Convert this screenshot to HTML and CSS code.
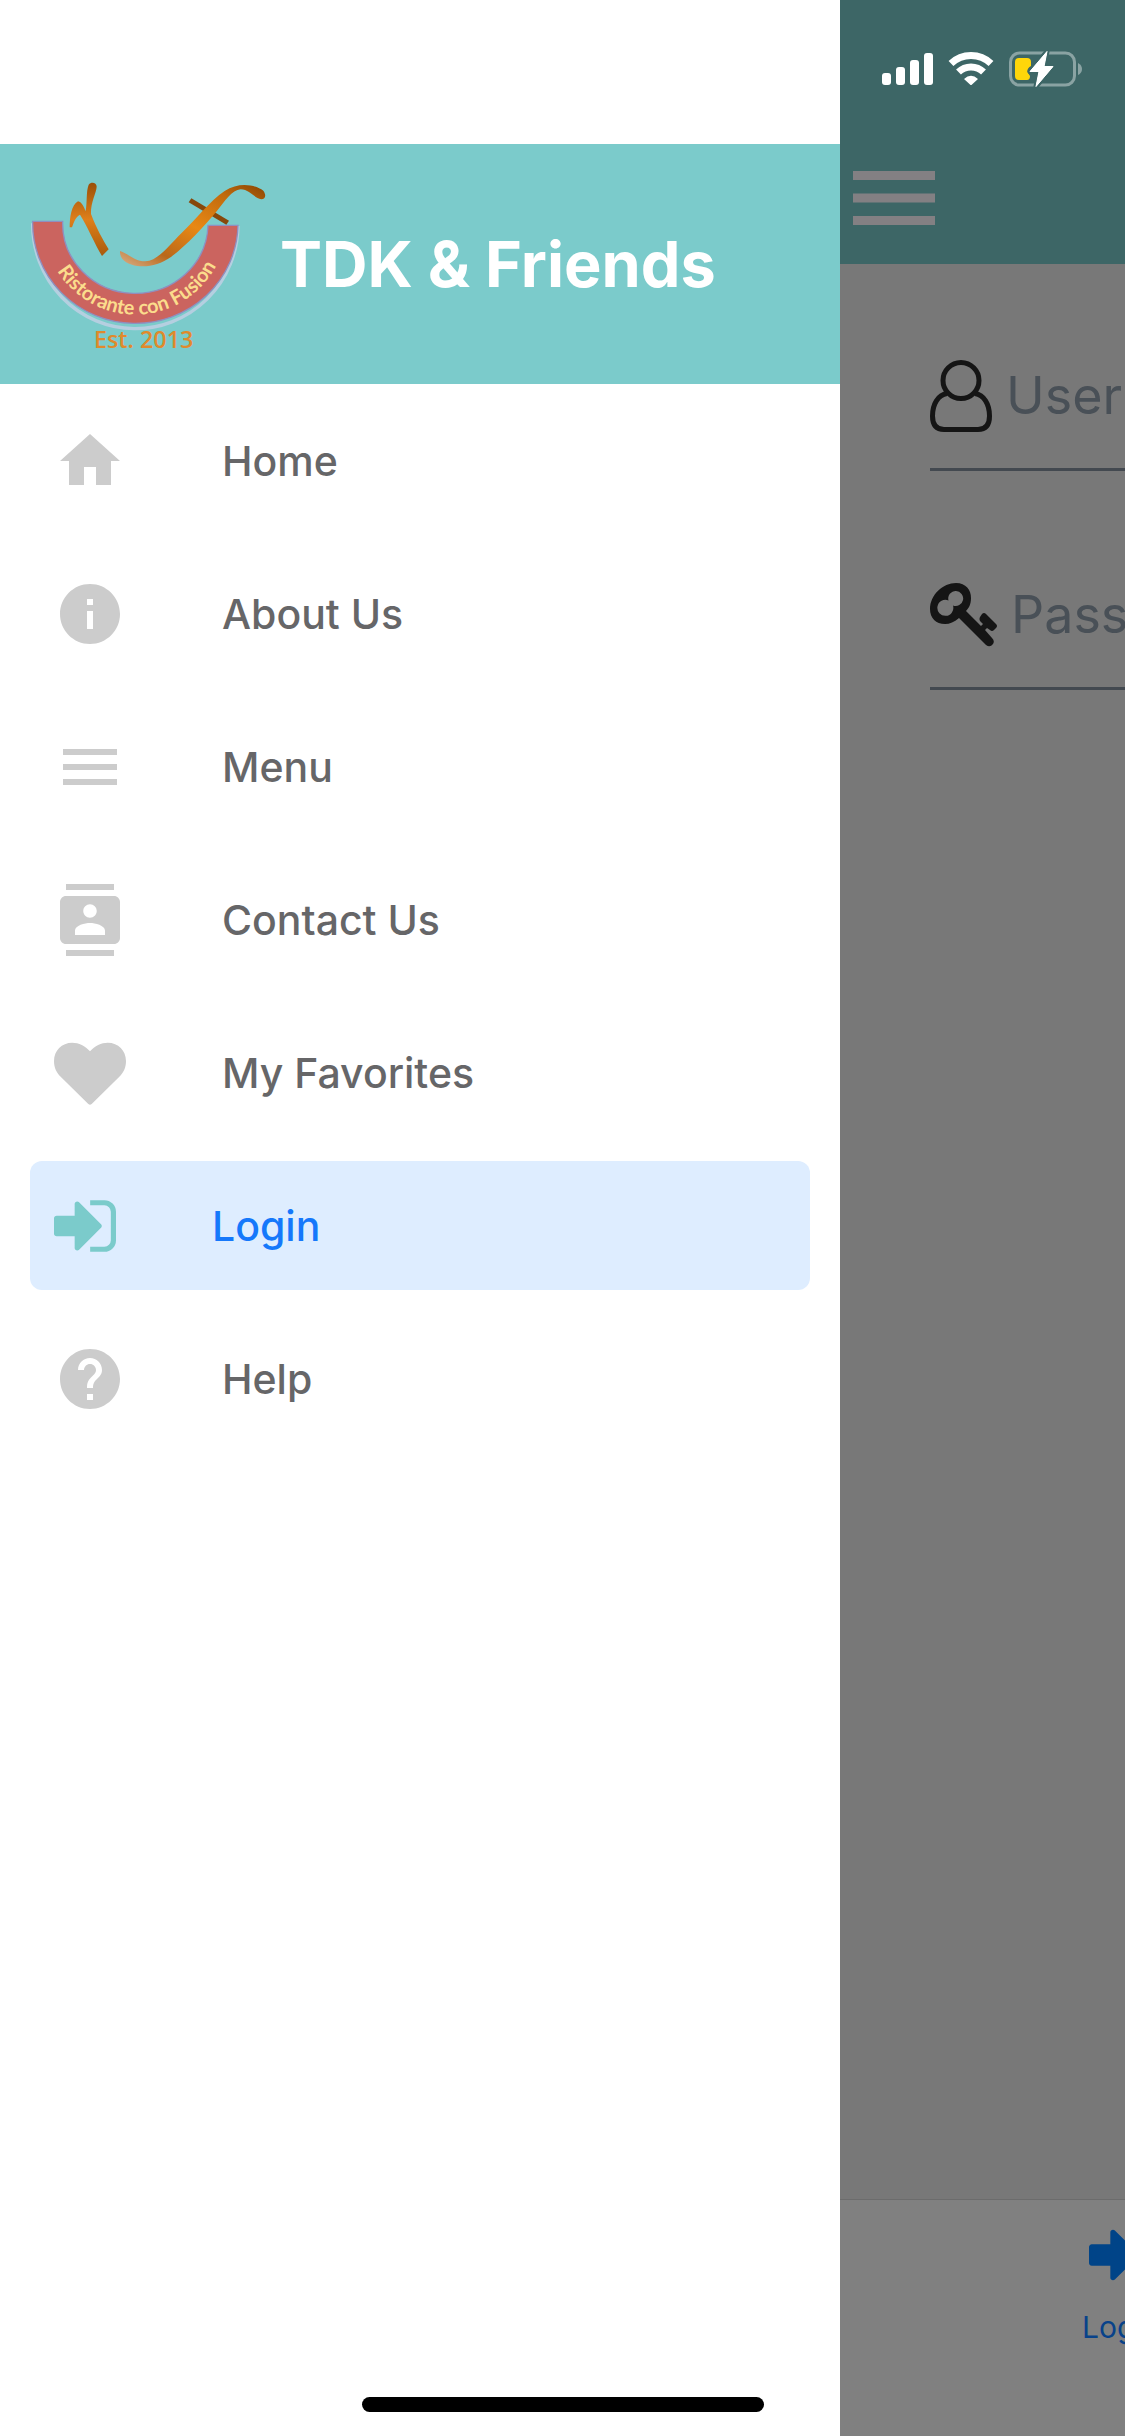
FILE: index.html
```html
<!DOCTYPE html>
<html lang="en">
<head>
  <meta charset="utf-8">
  <meta name="viewport" content="width=device-width, initial-scale=1">
  <title>TDK &amp; Friends</title>
  <link rel="stylesheet" href="styles.css">
</head>
<body>
  <div class="app">
    <aside class="drawer">
      <header class="brand">
        <svg class="brand-logo" viewBox="90 42 720 720" role="img" aria-label="Ristorante con Fusion">
          <defs>
            <linearGradient id="stroke-n" x1="0" y1="0" x2="0" y2="1">
              <stop offset="0" stop-color="#9a4f08"/>
              <stop offset="0.5" stop-color="#de7f1a"/>
              <stop offset="1" stop-color="#a85a0c"/>
            </linearGradient>
            <linearGradient id="stroke-f" x1="0" y1="1" x2="1" y2="0">
              <stop offset="0" stop-color="#d9b089"/>
              <stop offset="0.22" stop-color="#b9681a"/>
              <stop offset="0.5" stop-color="#e88814"/>
              <stop offset="0.8" stop-color="#c06a0d"/>
              <stop offset="1" stop-color="#8a4503"/>
            </linearGradient>
            <path id="text-arc" d="M132 280A274 274 0 0 0 680 280"/>
          </defs>
          <path d="M98 280A308 312 0 0 0 714 288" fill="none" stroke="#b5cfe0" stroke-width="10"/>
          <path d="M98 274H188A218 210 0 0 0 624 286H714A308 300 0 0 1 98 274Z" fill="#cb645f" stroke="#8f8fc0" stroke-width="4"/>
          <path d="M209 292C209 262 214 226 234 214C246 216 252 232 257 244C262 214 258 184 266 164C274 154 290 158 290 170C289 190 272 214 273 252C288 292 310 332 326 358L306 378C284 342 260 284 240 254C226 262 222 276 216 292Z" fill="url(#stroke-n)"/>
          <path d="M574 205L687 272L679 284L566 217Z" fill="#87480b"/>
          <path d="M360 363C386 372 404 394 436 394C474 392 506 348 544 310C586 270 630 212 674 183C716 155 766 164 790 182C800 196 796 208 784 208C762 204 748 178 722 178C696 180 674 214 650 244C610 292 560 346 514 380C480 404 446 412 412 408C384 404 358 390 360 363Z" fill="url(#stroke-f)"/>
          <text class="logo-motto"><textPath href="#text-arc" startOffset="51%" text-anchor="middle">Ristorante con Fusion</textPath></text>
          <text class="logo-year" x="431" y="655" text-anchor="middle">Est. 2013</text>
        </svg>
        <h1 class="brand-title">TDK &amp; Friends</h1>
      </header>

      <nav class="menu">
        <a class="menu-item" href="#home">
          <svg class="menu-icon" viewBox="0 0 24 24" aria-hidden="true"><path d="M10 20v-6h4v6h5v-8h3L12 3 2 12h3v8z"/></svg>
          <span>Home</span>
        </a>
        <a class="menu-item" href="#about">
          <svg class="menu-icon" viewBox="0 0 24 24" aria-hidden="true"><path d="M12 2C6.48 2 2 6.48 2 12s4.480 10 10 10 10-4.480 10-10S17.520 2 12 2zm1 15h-2v-6h2v6zm0-8h-2V7h2v2z"/></svg>
          <span>About Us</span>
        </a>
        <a class="menu-item" href="#menu">
          <svg class="menu-icon" viewBox="0 0 24 24" aria-hidden="true"><path d="M3 18h18v-2H3v2zm0-5h18v-2H3v2zm0-7v2h18V6H3z"/></svg>
          <span>Menu</span>
        </a>
        <a class="menu-item" href="#contact">
          <svg class="menu-icon" viewBox="0 0 24 24" aria-hidden="true"><path d="M20 0H4v2h16V0zM4 24h16v-2H4v2zM20 4H4c-1.100 0-2 .9-2 2v12c0 1.100.9 2 2 2h16c1.100 0 2-.9 2-2V6c0-1.100-.9-2-2-2zm-8 2.750c1.240 0 2.250 1.010 2.250 2.250s-1.010 2.250-2.250 2.250S9.750 10.240 9.750 9 10.760 6.750 12 6.750zM17 17H7v-1.500c0-1.670 3.330-2.500 5-2.500s5 .83 5 2.500V17z"/></svg>
          <span>Contact Us</span>
        </a>
        <a class="menu-item" href="#favorites">
          <svg class="menu-icon" viewBox="0 0 216 216" aria-hidden="true"><path d="M108 43C94 26 74 17 55 17C23 17 0 41 0 72C0 93 8 107 20 119L103 201Q108 205 113 201L196 119C208 107 216 93 216 72C216 41 193 17 161 17C142 17 122 26 108 43Z"/></svg>
          <span>My Favorites</span>
        </a>
        <a class="menu-item menu-item-active" href="#login" aria-current="page">
          <svg class="menu-icon menu-icon-narrow" viewBox="0 128 1536 1536" aria-hidden="true"><path d="M1184 896q0 26-19 45l-544 544q-19 19-45 19t-45-19-19-45v-288h-448q-26 0-45-19t-19-45v-384q0-26 19-45t45-19h448v-288q0-26 19-45t45-19 45 19l544 544q19 19 19 45zM1536 544v704q0 119-84.500 203.500t-203.500 84.500h-352v-128h352q66 0 113-47t47-113v-704q0-66-47-113t-113-47h-352v-128h352q119 0 203.500 84.500t84.500 203.500z"/></svg>
          <span>Login</span>
        </a>
        <a class="menu-item" href="#help">
          <svg class="menu-icon" viewBox="0 0 24 24" aria-hidden="true"><path d="M12 2C6.480 2 2 6.480 2 12s4.480 10 10 10 10-4.480 10-10S17.520 2 12 2zm1 17h-2v-2h2v2zm2.070-7.750l-.9.920C13.450 12.900 13 13.500 13 15h-2v-.5c0-1.100.45-2.100 1.170-2.830l1.240-1.260c.37-.36.59-.86.59-1.410 0-1.100-.9-2-2-2s-2 .9-2 2H8c0-2.210 1.790-4 4-4s4 1.790 4 4c0 .88-.36 1.680-.93 2.250z"/></svg>
          <span>Help</span>
        </a>
      </nav>
    </aside>

    <main class="screen">
      <header class="topbar">
        <div class="status">
          <svg width="51" height="36" viewBox="0 0 51 36" role="img" aria-label="Signal">
            <g fill="#fff"><rect y="22" width="9" height="12" rx="3"/><rect x="14" y="16" width="9" height="18" rx="3"/><rect x="28" y="9" width="9" height="25" rx="3"/><rect x="42" y="2" width="9" height="32" rx="3"/></g>
          </svg>
          <svg width="46" height="36" viewBox="0 0 46 36" role="img" aria-label="Wi-Fi">
            <g fill="none" stroke="#fff" stroke-width="7"><path d="M3 12.500A29 29 0 0 1 43 12.500"/><path d="M10.500 21A18 18 0 0 1 35.500 21"/></g>
            <path d="M16 28Q23 21.500 30 28L24 33.500Q23 34.500 22 33.500Z" fill="#fff"/>
          </svg>
          <svg width="74" height="36" viewBox="0 0 74 36" role="img" aria-label="Battery charging">
            <rect x="1.500" y="2" width="64" height="32" rx="9" fill="none" stroke="#8aa3a3" stroke-width="3"/>
            <path d="M69 12Q73 14 73 18T69 24Z" fill="#8aa3a3"/>
            <path d="M10 7H18Q22 7 22 11V15Q17 18 19 22L21 25Q21 29 18 29H10Q6 29 6 25V11Q6 7 10 7Z" fill="#ffd60a"/>
            <path d="M38 0.500L21 20.500H30L27 35.500L44 15.500H35Z" fill="#fff" stroke="#3d6666" stroke-width="5" stroke-linejoin="round" paint-order="stroke"/>
            <path d="M38 0.500L21 20.500H30L27 35.500L44 15.500H35Z" fill="#fff" stroke="#fff" stroke-width="1" stroke-linejoin="round"/>
          </svg>
        </div>
        <button class="menu-button" type="button" aria-label="Toggle menu">
          <svg width="82" height="54" viewBox="0 0 82 54" aria-hidden="true"><path d="M0 0H82V9H0ZM0 22.500H82V31.500H0ZM0 45H82V54H0Z" fill="#838083"/></svg>
        </button>
      </header>

      <form class="login-form">
        <label class="field">
          <svg width="62" height="72" viewBox="0 0 62 72" aria-hidden="true"><g fill="none" stroke="#151515" stroke-width="5"><circle cx="31" cy="20.500" r="18"/><path d="M17 33.500C8 35 2.500 44 2.500 56Q2.500 69.500 14 69.500H48Q59.500 69.500 59.500 56C59.500 44 54 35 45 33.500"/></g></svg>
          <input class="field-input" type="text" placeholder="Username" aria-label="Username">
        </label>
        <label class="field">
          <svg width="67" height="64" viewBox="0 0 67 64" aria-hidden="true">
            <path fill="#151515" fill-rule="evenodd" d="M26 0C36 0 41 7 41 15C41 21 39 25 36 28L51 43L53 41L50 38Q49 36 50 34L52 31Q54 29 56 31L66 41Q68 43 66 45L64 47Q62 49 60 47L57 45L55 47L62 55Q65 58 63 61Q60 65 56 62L29 35C24 39 20 41 15 41C6 41 0 35 0 26C0 12 13 0 26 0ZM26 8A7.500 7.500 0 0 0 18.500 17.500A8 8 0 1 0 23 22.500A7.500 7.500 0 1 0 26 8Z"/>
          </svg>
          <input class="field-input" type="password" placeholder="Password" aria-label="Password">
        </label>
      </form>

      <nav class="tabs">
        <a class="tab" href="#login">
          <svg width="64" height="64" viewBox="0 128 1536 1536" aria-hidden="true"><path fill="#004488" d="M1184 896q0 26-19 45l-544 544q-19 19-45 19t-45-19-19-45v-288h-448q-26 0-45-19t-19-45v-384q0-26 19-45t45-19h448v-288q0-26 19-45t45-19 45 19l544 544q19 19 19 45zM1536 544v704q0 119-84.500 203.500t-203.500 84.500h-352v-128h352q66 0 113-47t47-113v-704q0-66-47-113t-113-47h-352v-128h352q119 0 203.500 84.500t84.500 203.500z"/></svg>
          <span>Login</span>
        </a>
      </nav>
    </main>
    <div class="home-indicator"></div>
  </div>
</body>
</html>
```
FILE: styles.css
```css
*,
*::before,
*::after {
  box-sizing: border-box;
}

body {
  margin: 0;
  font-family: Inter, "Liberation Sans", sans-serif;
}

svg {
  display: block;
  flex: none;
}

a {
  text-decoration: none;
}

.app {
  position: relative;
  display: grid;
  grid-template-columns: 56fr 19fr;
  min-height: 100vh;
  overflow: hidden;
}

/* Drawer */

.drawer {
  padding-top: 144px;
  background: #fff;
}

.brand {
  display: flex;
  align-items: center;
  gap: 10px;
  padding-left: 30px;
  background: #7bcbcb;
}

.brand-logo {
  width: 240px;
  height: 240px;
}

.logo-motto {
  font: 700 60px Lato, sans-serif;
  fill: #fbdc8c;
}

.logo-year {
  font: 600 70px "Open Sans", sans-serif;
  fill: #e08a2c;
}

.brand-title {
  margin: 0;
  color: #fff;
  font-size: 63px;
  font-weight: 700;
  line-height: 80px;
  white-space: nowrap;
}

.menu {
  display: flex;
  flex-direction: column;
  gap: 24px;
  padding: 12px 30px;
}

.menu-item {
  display: flex;
  align-items: center;
  gap: 96px;
  height: 129px;
  padding: 0 24px;
  border-radius: 12px;
  color: #666668;
  font-size: 41px;
  font-weight: 500;
  line-height: 48px;
}

.menu-icon {
  width: 72px;
  height: 72px;
  fill: #ccc;
}

.menu-item-active {
  background: #deedff;
  color: #1578fb;
}

.menu-icon-narrow {
  width: 62px;
  height: 62px;
  fill: #7bcbcb;
}

/* Dimmed screen, pushed aside by the drawer */

.screen {
  display: flex;
  flex-direction: column;
  min-width: 0;
  overflow: hidden;
  background: #787878;
}

.topbar {
  height: 264px;
  padding-top: 51px;
  background: #3d6666;
}

.status {
  display: flex;
  gap: 15px;
  padding-left: 42px;
}

.menu-button {
  display: block;
  margin: 84px 0 0 13px;
  padding: 0;
  border: 0;
  background: none;
}

.login-form {
  display: flex;
  flex: 1;
  flex-direction: column;
  gap: 69px;
  width: 100vw;
  padding: 57px 90px 0;
}

.field {
  display: flex;
  align-items: center;
  gap: 14px;
  height: 150px;
  padding-top: 3px;
  border-bottom: 3px solid #434950;
}

.field-input {
  flex: 1;
  min-width: 0;
  padding: 0;
  border: 0;
  outline: 0;
  background: none;
  color: #151515;
  font: 400 52px/64px Inter, "Liberation Sans", sans-serif;
}

.field-input::placeholder {
  color: #495057;
  opacity: 1;
}

.tabs {
  display: flex;
  width: 100vw;
  height: 237px;
  border-top: 1px solid #6c6c6c;
  background: #808080;
}

.tab {
  display: flex;
  flex-direction: column;
  align-items: center;
  gap: 20px;
  width: 50%;
  padding-top: 23px;
  color: #08428a;
  font-size: 30px;
  line-height: 40px;
}

.home-indicator {
  position: absolute;
  bottom: 24px;
  left: 50%;
  width: 402px;
  height: 15px;
  border-radius: 8px;
  background: #000;
  transform: translateX(-50%);
}
```
